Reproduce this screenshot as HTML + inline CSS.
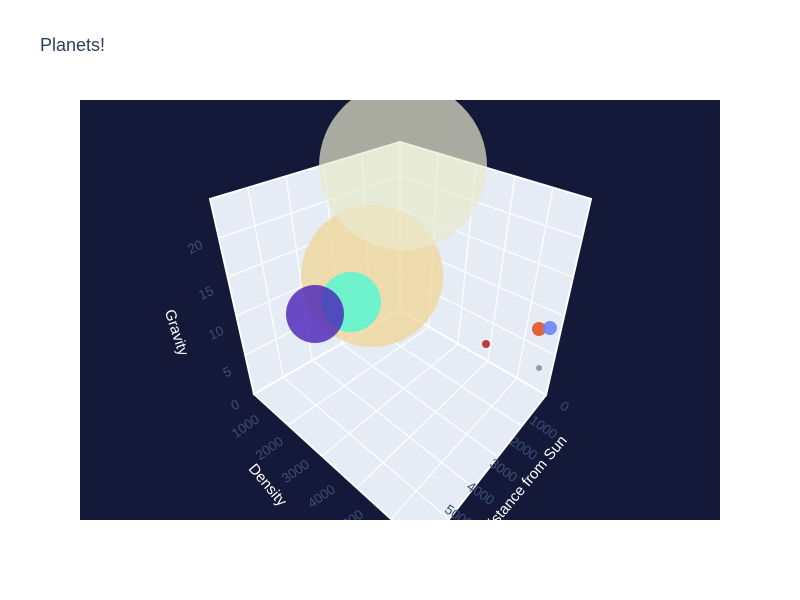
<!DOCTYPE html>
<html><head><meta charset="utf-8"><style>
html,body{margin:0;padding:0;background:#fff;}
svg{display:block;font-family:"Liberation Sans","DejaVu Sans",sans-serif;}
</style></head><body>
<svg width="800" height="600" viewBox="0 0 800 600" xmlns="http://www.w3.org/2000/svg">
<rect width="800" height="600" fill="#fff"/>
<text x="40" y="51" font-size="18" fill="#2a3f5f">Planets!</text>
<defs><clipPath id="c"><rect x="80" y="100" width="640" height="420"/></clipPath></defs>
<g clip-path="url(#c)">
<rect x="80" y="100" width="640" height="420" fill="#141839"/>
<g fill="#e5ecf6" stroke="#fff" stroke-width="2">
<polygon points="210,199 400,142 400,310 254,394"/>
<polygon points="400,142 591,199 546,395 400,310"/>
<polygon points="400,310 546,395 425,550 254,394"/>
</g>
<g stroke="#fff" stroke-width="1.2">
<line x1="248" y1="188" x2="283" y2="377"/><line x1="286" y1="176" x2="312" y2="360"/><line x1="324" y1="165" x2="342" y2="344"/><line x1="362" y1="153" x2="371" y2="327"/>
<line x1="219" y1="238" x2="400" y2="176"/><line x1="228" y1="277" x2="400" y2="209"/><line x1="236" y1="316" x2="400" y2="243"/><line x1="245" y1="355" x2="400" y2="276"/>
<line x1="438" y1="153" x2="429" y2="327"/><line x1="476" y1="165" x2="458" y2="344"/><line x1="515" y1="176" x2="488" y2="361"/><line x1="553" y1="188" x2="517" y2="378"/>
<line x1="400" y1="176" x2="582" y2="238"/><line x1="400" y1="209" x2="573" y2="277"/><line x1="400" y1="243" x2="564" y2="316"/><line x1="400" y1="276" x2="555" y2="355"/>
<line x1="371" y1="327" x2="522" y2="426"/><line x1="342" y1="344" x2="498" y2="457"/><line x1="312" y1="360" x2="474" y2="488"/><line x1="283" y1="377" x2="449" y2="519"/>
<line x1="429" y1="327" x2="288" y2="425"/><line x1="458" y1="344" x2="322" y2="456"/><line x1="488" y1="361" x2="357" y2="488"/><line x1="517" y1="378" x2="391" y2="519"/>
</g>
<circle cx="372" cy="276" r="71" fill="#f0d594" fill-opacity="0.75"/>
<circle cx="403" cy="166" r="84" fill="#e9e9cc" fill-opacity="0.7"/>
<circle cx="351" cy="302" r="30" fill="#6ff3cc"/>
<circle cx="315" cy="314" r="29" fill="#4a22b8" fill-opacity="0.8"/>
<circle cx="486" cy="344" r="4" fill="#c0393c"/>
<circle cx="539" cy="329" r="7" fill="#e0643c"/>
<circle cx="550" cy="328" r="7" fill="#6c84f8" fill-opacity="0.9"/>
<circle cx="539" cy="368" r="3" fill="#999"/>
<g fill="#3d4f72" font-size="13.5">
<text transform="translate(197,251) rotate(-25)" text-anchor="middle">20</text>
<text transform="translate(208,297) rotate(-25)" text-anchor="middle">15</text>
<text transform="translate(218,337) rotate(-25)" text-anchor="middle">10</text>
<text transform="translate(229,376) rotate(-25)" text-anchor="middle">5</text>
<text transform="translate(237,409) rotate(-25)" text-anchor="middle">0</text>
<text transform="translate(248,430) rotate(-35)" text-anchor="middle">1000</text>
<text transform="translate(272,452) rotate(-35)" text-anchor="middle">2000</text>
<text transform="translate(298,475) rotate(-35)" text-anchor="middle">3000</text>
<text transform="translate(324,500) rotate(-35)" text-anchor="middle">4000</text>
<text transform="translate(352,525) rotate(-35)" text-anchor="middle">5000</text>
<text transform="translate(562,410) rotate(35)" text-anchor="middle">0</text>
<text transform="translate(541,431) rotate(35)" text-anchor="middle">1000</text>
<text transform="translate(521,452) rotate(35)" text-anchor="middle">2000</text>
<text transform="translate(501,474) rotate(35)" text-anchor="middle">3000</text>
<text transform="translate(478,497) rotate(35)" text-anchor="middle">4000</text>
<text transform="translate(456,520) rotate(35)" text-anchor="middle">5000</text>
</g>
<g fill="#fff" font-size="15">
<text transform="translate(172,334) rotate(72)" text-anchor="middle">Gravity</text>
<text transform="translate(264,488) rotate(50)" text-anchor="middle">Density</text>
<text transform="translate(528,488) rotate(-50)" text-anchor="middle">Distance from Sun</text>
</g>
</g>
</svg>
</body></html>
